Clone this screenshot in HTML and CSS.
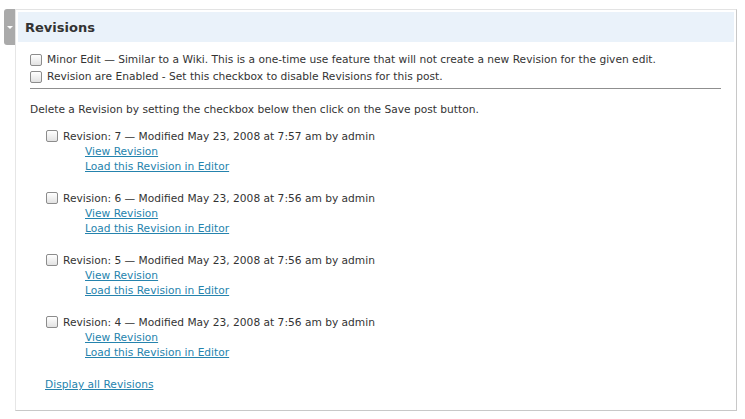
FILE: index.html
```html
<!DOCTYPE html>
<html>
<head>
<meta charset="utf-8">
<link rel="stylesheet" href="styles.css">
</head>
<body>
<div class="page">
  <div class="handle"><span class="arrow"></span></div>
  <div class="postbox">
    <h3 class="hndle">Revisions</h3>
    <div class="inside">
      <label class="opt"><input type="checkbox"> Minor Edit — Similar to a Wiki. This is a one-time use feature that will not create a new Revision for the given edit.</label>
      <label class="opt"><input type="checkbox"> Revision are Enabled - Set this checkbox to disable Revisions for this post.</label>
      <hr class="sep">
      <p class="note">Delete a Revision by setting the checkbox below then click on the Save post button.</p>
      <ul class="revs">
        <li class="rev">
          <label class="opt rev-head"><input type="checkbox"> Revision: 7 — Modified May 23, 2008 at 7:57 am by admin</label>
          <a href="#" class="link">View Revision</a>
          <a href="#" class="link">Load this Revision in Editor</a>
        </li>
        <li class="rev">
          <label class="opt rev-head"><input type="checkbox"> Revision: 6 — Modified May 23, 2008 at 7:56 am by admin</label>
          <a href="#" class="link">View Revision</a>
          <a href="#" class="link">Load this Revision in Editor</a>
        </li>
        <li class="rev">
          <label class="opt rev-head"><input type="checkbox"> Revision: 5 — Modified May 23, 2008 at 7:56 am by admin</label>
          <a href="#" class="link">View Revision</a>
          <a href="#" class="link">Load this Revision in Editor</a>
        </li>
        <li class="rev">
          <label class="opt rev-head"><input type="checkbox"> Revision: 4 — Modified May 23, 2008 at 7:56 am by admin</label>
          <a href="#" class="link">View Revision</a>
          <a href="#" class="link">Load this Revision in Editor</a>
        </li>
      </ul>
      <div class="more"><a href="#" class="all">Display all Revisions</a></div>
    </div>
  </div>
</div>
</body>
</html>
```
FILE: styles.css
```css
html, body {
  margin: 0;
  padding: 0;
  background: #fff;
}
body {
  font-family: "DejaVu Sans", "Liberation Sans", sans-serif;
  font-size: 10.65px;
  color: #333;
}
.page {
  display: flex;
  align-items: flex-start;
  padding: 9px 0 0 4px;
}
.handle {
  width: 11px;
  height: 36px;
  background: #aaaaaa;
  border-radius: 3px 0 0 3px;
  display: flex;
  justify-content: center;
  padding-top: 17px;
  box-sizing: border-box;
}
.arrow {
  width: 0;
  height: 0;
  border-left: 3px solid transparent;
  border-right: 3px solid transparent;
  border-top: 3px solid #fff;
}
.postbox {
  width: 722px;
  height: 402px;
  box-sizing: border-box;
  border-top: 1px solid #e3e3e3;
  border-left: 1px solid #e6e6e6;
  border-right: 1px solid #c8c8c8;
  border-bottom: 1px solid #c8c8c8;
  padding: 2px;
}
.hndle {
  margin: 0;
  height: 30px;
  background: #eaf2fa;
  font-size: 13px;
  font-weight: bold;
  color: #333;
  line-height: 32px;
  padding-left: 7px;
}
.inside {
  padding: 9px 12px 0 12px;
}
.opt {
  display: flex;
  align-items: center;
  gap: 5px;
  height: 17px;
  white-space: nowrap;
}
.rev-head {
  height: 16px;
}
input[type=checkbox] {
  appearance: none;
  -webkit-appearance: none;
  margin: 0;
  width: 12px;
  height: 12px;
  border: 1px solid #8c8c8c;
  border-radius: 2px;
  background: linear-gradient(#ffffff, #e2e2e2);
  box-sizing: border-box;
  flex: none;
}
.sep {
  border: 0;
  border-top: 1px solid #8f8f8f;
  margin: 3px 0 0 0;
  width: 691px;
}
.note {
  margin: 12px 0 0 0;
  line-height: 17px;
}
.revs {
  list-style: none;
  margin: 10px 0 0 0;
  padding: 0 0 0 16px;
}
.rev {
  margin-bottom: 16px;
}
.link {
  display: block;
  width: max-content;
  margin-left: 39px;
  line-height: 15px;
  color: #2583ad;
}
.more {
  padding: 1px 0 0 15px;
  line-height: 15px;
}
.all {
  color: #2583ad;
}
```
